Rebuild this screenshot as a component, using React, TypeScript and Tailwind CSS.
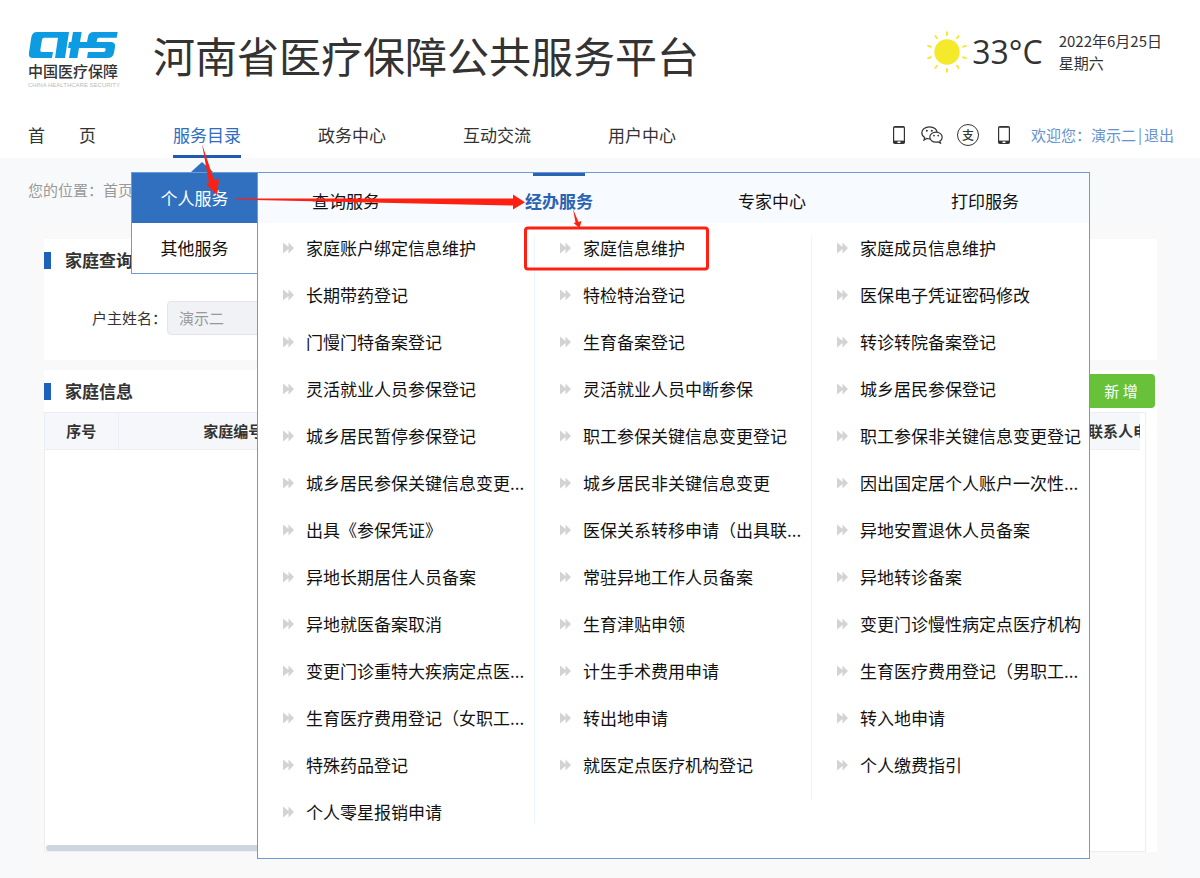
import React from "react";

const navItems = ["首　　页", "服务目录", "政务中心", "互动交流", "用户中心"];

const menuTabs = ["查询服务", "经办服务", "专家中心", "打印服务"];

const menuColumns: string[][] = [
  [
    "家庭账户绑定信息维护",
    "长期带药登记",
    "门慢门特备案登记",
    "灵活就业人员参保登记",
    "城乡居民暂停参保登记",
    "城乡居民参保关键信息变更...",
    "出具《参保凭证》",
    "异地长期居住人员备案",
    "异地就医备案取消",
    "变更门诊重特大疾病定点医...",
    "生育医疗费用登记（女职工...",
    "特殊药品登记",
    "个人零星报销申请",
  ],
  [
    "家庭信息维护",
    "特检特治登记",
    "生育备案登记",
    "灵活就业人员中断参保",
    "职工参保关键信息变更登记",
    "城乡居民非关键信息变更",
    "医保关系转移申请（出具联...",
    "常驻异地工作人员备案",
    "生育津贴申领",
    "计生手术费用申请",
    "转出地申请",
    "就医定点医疗机构登记",
  ],
  [
    "家庭成员信息维护",
    "医保电子凭证密码修改",
    "转诊转院备案登记",
    "城乡居民参保登记",
    "职工参保非关键信息变更登记",
    "因出国定居个人账户一次性...",
    "异地安置退休人员备案",
    "异地转诊备案",
    "变更门诊慢性病定点医疗机构",
    "生育医疗费用登记（男职工...",
    "转入地申请",
    "个人缴费指引",
  ],
];

const sunRays = [0, 36, 72, 108, 144, 180, 216, 252, 288, 324];

const Logo: React.FC = () => (
  <a href="#" className="flex w-[90px] flex-col">
    <svg viewBox="0 0 268 78" className="h-[26px] w-[90px]" fill="#0d9be2">
      <path d="M26 0H122L110 78H80L89 17H48Q42 17 41 23L36 53Q35 60 41 60H74L71 78H14Q-1 78 2 62L9 16Q12 0 26 0Z" />
      <path d="M134 0H160L155 30H176L179 14Q182 0 196 0H268L265 17H212Q207 17 206 22L205 30H246Q262 30 260 45L257 62Q254 78 238 78H176L179 60H226Q231 60 232 54Q233 48 227 48H152L147 78H122L127 48H119L122 30H129Z" />
    </svg>
    <span className="mt-[2px] text-[15px] leading-[22px] font-medium text-[#333]">
      中国医疗保障
    </span>
    <span className="font-['Liberation_Sans',sans-serif] text-[6px] leading-[6px] whitespace-nowrap text-[#bbb]">
      CHINA HEALTHCARE SECURITY
    </span>
  </a>
);

const SunIcon: React.FC = () => (
  <svg viewBox="0 0 42 42" className="h-[42px] w-[42px]">
    <circle cx="21" cy="21" r="12.7" fill="#f5e92b" />
    {sunRays.map((deg) => (
      <path
        key={deg}
        d="M21 1.2V4"
        stroke="#f5e92b"
        strokeWidth="2"
        strokeLinecap="round"
        transform={`rotate(${deg} 21 21)`}
      />
    ))}
  </svg>
);

const PhoneIcon: React.FC = () => (
  <svg viewBox="0 0 12 18" className="h-[18px] w-[12px]">
    <rect x="0" y="0" width="12" height="18" rx="1.8" fill="#333" />
    <rect x="1.2" y="1.8" width="9.6" height="12.8" fill="#fff" />
    <rect x="4.4" y="15.6" width="3.2" height="1.4" rx="0.4" fill="#fff" />
  </svg>
);

const WechatIcon: React.FC = () => (
  <svg viewBox="0 0 22 18" className="h-[18px] w-[22px]" fill="#fff" stroke="#333" strokeWidth="1.2">
    <path d="M8.5.8C4.3.8.8 3.4.8 6.8c0 2 1.1 3.6 2.9 4.7L3 14l2.9-1.5c.8.2 1.7.4 2.6.4 4.3 0 7.7-2.7 7.7-6.100S12.800.8 8.500.8Z" />
    <path d="M15 6.200c-3.500 0-6.200 2.200-6.200 5s2.700 5 6.200 5c.8 0 1.500-.1 2.200-.3l2.300 1.200-.6-2c1.400-.9 2.300-2.300 2.300-3.900 0-2.800-2.700-5-6.200-5Z" />
    <g fill="#333" stroke="none">
      <circle cx="5.8" cy="4.8" r="1" />
      <circle cx="10.8" cy="4.8" r="1" />
      <circle cx="13" cy="9.6" r=".9" />
      <circle cx="17.2" cy="9.6" r=".9" />
    </g>
  </svg>
);

const DoubleArrow: React.FC = () => (
  <svg viewBox="0 0 11 12" className="h-[12px] w-[11px] shrink-0" fill="#d3d3d3">
    <path d="M0 .5L5.5 5V.5L11 6L5.5 11.5V7L0 11.5Z" />
  </svg>
);

const SectionTitle: React.FC<{ title: string }> = ({ title }) => (
  <h2 className="flex items-center gap-[14px] text-[17px] leading-6 font-bold text-[#333]">
    <span className="h-[17px] w-[7px] bg-[#1c62b9]" />
    {title}
  </h2>
);

const ServiceMenu: React.FC = () => (
  <div className="absolute top-[172px] right-[110px] left-[131px] z-10 flex items-start text-[17px] text-[#111]">
    <svg viewBox="0 0 22 10" className="absolute -top-[10px] left-[60px] h-[10px] w-[22px]">
      <path d="M0 10L11 0L22 10Z" fill="#3070bf" />
    </svg>
    <div className="flex w-[126px] shrink-0 flex-col border border-r-0 border-[#6b9ad6] bg-white">
      <button className="h-[50px] bg-[#3070bf] text-white">个人服务</button>
      <button className="h-[50px]">其他服务</button>
    </div>
    <div className="min-w-0 grow border border-[#6b9ad6] bg-white">
      <div className="flex h-[50px] justify-between bg-[#f7fbff] pr-[70px] pl-[54px]">
        {menuTabs.map((tab) =>
          tab === "经办服务" ? (
            <button key={tab} className="flex flex-col items-center font-bold text-[#2a62b4]">
              <span className="h-[3px] w-[52px] bg-[#2a62b4]" />
              <span className="pt-3">{tab}</span>
            </button>
          ) : (
            <button key={tab} className="flex flex-col pt-[15px]">
              {tab}
            </button>
          )
        )}
      </div>
      <div className="grid grid-cols-3 items-start pt-[13px] pb-[34px]">
        {menuColumns.map((column, index) => (
          <ul
            key={index}
            className={
              index === 0
                ? "flex flex-col gap-[23px] border-r border-[#edf5fc] pl-[25px]"
                : index === 1
                ? "flex flex-col gap-[23px] border-r border-[#edf5fc] pb-[23px] pl-[25px]"
                : "flex flex-col gap-[23px] pl-[25px]"
            }
          >
            {column.map((item) => (
              <li key={item} className="h-6">
                <a href="#" className="flex items-center gap-3 leading-6 whitespace-nowrap">
                  <DoubleArrow />
                  {item}
                </a>
              </li>
            ))}
          </ul>
        ))}
      </div>
    </div>
  </div>
);

// Red guide arrows and frame drawn over the menu
const Guide: React.FC = () => (
  <svg
    viewBox="0 0 720 280"
    className="pointer-events-none absolute top-0 left-0 z-20 h-[280px] w-[720px]"
    fill="#ff2012"
  >
    <path d="M202 144L214 180L219 179L217 195L206 184L209 183Z" />
    <path d="M235 198.5L513 198.5V194.5L525 202.3L513 209.5V205.5L235 199.5Z" />
    <path d="M573 209L578.5 222L581.5 221L579.5 228L573.500 223L575.500 222.500Z" />
    <rect x="525.5" y="228" width="182" height="41" rx="2.5" fill="none" stroke="#ff2012" strokeWidth="3" />
  </svg>
);

const App: React.FC = () => {
  return (
    <div className="relative min-h-screen bg-[#f7f9fb] font-['Noto_Sans_CJK_SC',sans-serif] text-[15px] text-[#333]">
      <header className="bg-white">
        <div className="flex h-[112px] items-start pr-[38px] pl-7">
          <div className="pt-8">
            <Logo />
          </div>
          <h1 className="ml-[35px] pt-[25px] text-[42px] leading-[60px] font-normal whitespace-nowrap">
            河南省医疗保障公共服务平台
          </h1>
          <div className="ml-auto flex items-center pt-[30px]">
            <SunIcon />
            <span className="ml-1 font-['Open_Sans',sans-serif] text-[32px] leading-[42px]">
              33°C
            </span>
            <div className="ml-4 leading-[22px]">
              <p>2022年6月25日</p>
              <p>星期六</p>
            </div>
          </div>
        </div>
        <div className="flex h-[46px] justify-between pr-[26px] pl-7">
          <nav className="flex gap-[77px] text-[17px]">
            {navItems.map((item) => (
              <a
                key={item}
                href="#"
                className={
                  item === "服务目录"
                    ? "border-b-3 border-[#1f5cb0] leading-[46px] whitespace-nowrap text-[#2f6dc0]"
                    : "leading-[46px] whitespace-nowrap"
                }
              >
                {item}
              </a>
            ))}
          </nav>
          <div className="flex h-[46px] items-center text-[#6493cf]">
            <button aria-label="手机" className="mr-4">
              <PhoneIcon />
            </button>
            <button aria-label="微信" className="mr-[14px]">
              <WechatIcon />
            </button>
            <button className="mr-[19px] flex h-[22px] w-[22px] items-center justify-center rounded-full border border-[#333] text-[12px] leading-none font-medium text-[#333]">
              支
            </button>
            <button aria-label="手机" className="mr-[21px]">
              <PhoneIcon />
            </button>
            <span>欢迎您：</span>
            <a href="#">演示二</a>
            <span className="px-[2px]">|</span>
            <a href="#">退出</a>
          </div>
        </div>
      </header>

      <p className="h-[65px] px-7 pt-[21px] leading-[22px] text-[#999]">您的位置：首页</p>

      <main className="mx-7 bg-[#f9f9f9] pt-4 pr-[15px] pb-[26px] pl-4">
        <section className="h-[121px] bg-white pt-[9px]">
          <SectionTitle title="家庭查询" />
          <div className="mt-[29px] flex items-center pl-12">
            <label htmlFor="holder">户主姓名：</label>
            <input
              id="holder"
              disabled
              value="演示二"
              className="h-[34px] w-[200px] rounded border border-[#e2e5ea] bg-[#f0f2f5] px-[11px] pb-[2px] text-[#999]"
            />
          </div>
        </section>

        <section className="mt-[10px] bg-white">
          <div className="flex h-[42px] items-center justify-between pr-[2px]">
            <SectionTitle title="家庭信息" />
            <button className="h-[34px] w-[68px] rounded bg-[#67c23a] text-white">新 增</button>
          </div>
          <div className="mr-[11px] flex min-h-[440px] flex-col justify-between border border-[#ebeef5] bg-white">
            <div className="mr-[5px] overflow-hidden">
              <table className="w-full table-fixed border-collapse">
                <thead>
                  <tr className="h-9 border-b border-[#ebeef5] bg-[#f5f7fa]">
                    <th className="w-[73px] border-r border-[#ebeef5]">序号</th>
                    <th className="w-[230px]">家庭编号</th>
                    <td></td>
                    <th className="w-[52px] overflow-hidden text-left whitespace-nowrap">联系人电</th>
                  </tr>
                </thead>
              </table>
            </div>
            <div className="ml-px h-[6px] w-1/2 rounded-full bg-[#cfd5de]" />
          </div>
        </section>
      </main>

      <ServiceMenu />
      <Guide />
    </div>
  );
};

export default App;
